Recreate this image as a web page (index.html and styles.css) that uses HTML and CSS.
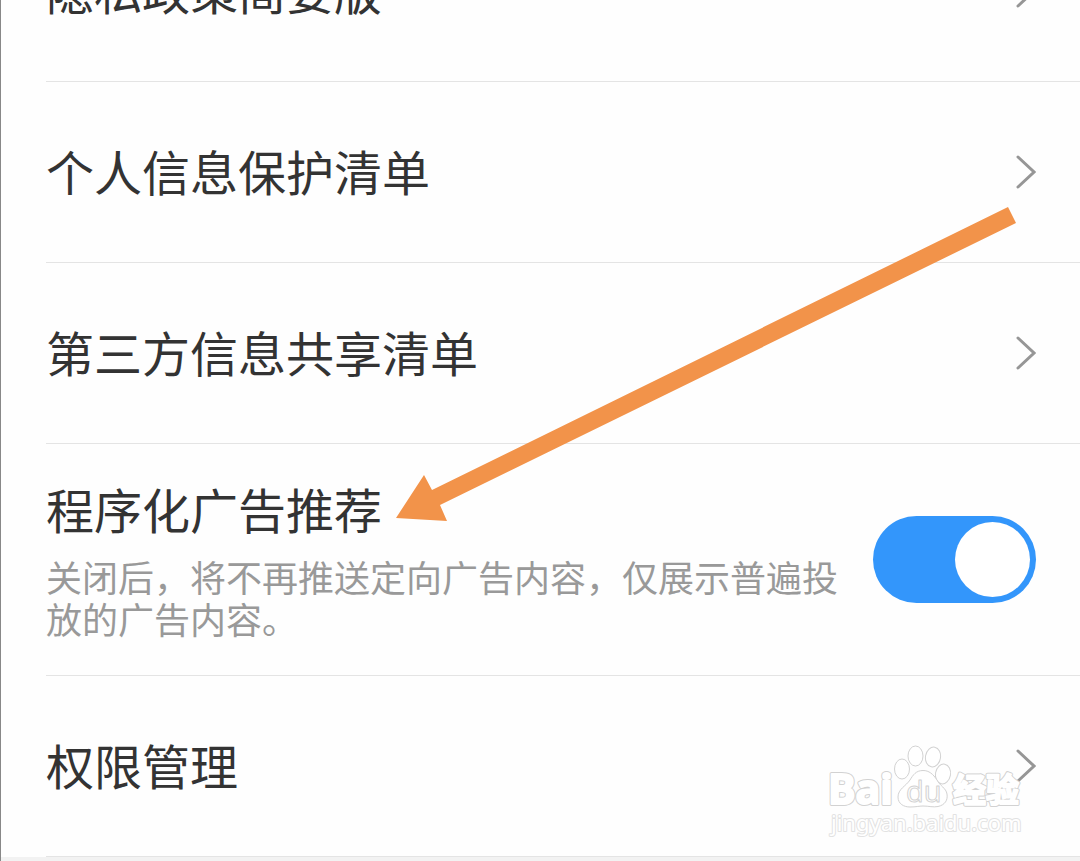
FILE: index.html
```html
<!DOCTYPE html>
<html lang="zh-CN">

<head>
    <meta charset="UTF-8">
    <meta name="viewport" content="width=device-width, initial-scale=1.0">
    <title>隐私设置</title>
    <link rel="stylesheet" href="styles.css">
</head>

<body>
    <div class="page">
        <ul class="setting_list">
            <li>
                <a class="row" href="#">
                    <span class="name">隐私政策简要版</span>
                    <svg class="chevron" viewBox="0 0 20 34"><path d="M2 2L18 17L2 32"/></svg>
                </a>
            </li>
            <li>
                <a class="row" href="#">
                    <span class="name">个人信息保护清单</span>
                    <svg class="chevron" viewBox="0 0 20 34"><path d="M2 2L18 17L2 32"/></svg>
                </a>
            </li>
            <li>
                <a class="row" href="#">
                    <span class="name">第三方信息共享清单</span>
                    <svg class="chevron" viewBox="0 0 20 34"><path d="M2 2L18 17L2 32"/></svg>
                </a>
            </li>
            <li>
                <div class="row switch_row">
                    <div class="info">
                        <label class="name" for="ad_switch">程序化广告推荐</label>
                        <p class="desc" id="ad_desc">关闭后，将不再推送定向广告内容，仅展示普遍投放的广告内容。</p>
                    </div>
                    <input class="switch" type="checkbox" role="switch" id="ad_switch" aria-describedby="ad_desc" checked>
                </div>
            </li>
            <li>
                <a class="row" href="#">
                    <span class="name">权限管理</span>
                    <svg class="chevron" viewBox="0 0 20 34"><path d="M2 2L18 17L2 32"/></svg>
                </a>
            </li>
        </ul>

        <svg class="pointer" viewBox="0 0 620 315">
            <path d="M0 311L28 268L36 283L612 0L620 16L44 298L51 314Z"/>
        </svg>

        <svg class="watermark" viewBox="0 0 200 100">
            <defs>
                <g id="words">
                    <text class="latin" x="0" y="64">Bai</text>
                    <text class="hans" x="125" y="62">经验</text>
                </g>
                <text id="site" class="site" x="3" y="91">jingyan.baidu.com</text>
            </defs>
            <!-- grey outline first, then the white letters over it -->
            <use class="outer" href="#words"/>
            <use class="inner" href="#words"/>
            <g class="paw">
                <ellipse cx="74" cy="29" rx="7.5" ry="10"/>
                <ellipse cx="87.5" cy="16" rx="7.5" ry="10"/>
                <ellipse cx="105" cy="17" rx="7.5" ry="10" transform="rotate(10 105 17)"/>
                <ellipse cx="115" cy="34" rx="7.5" ry="10" transform="rotate(10 115 34)"/>
                <path d="M95 30.500C88 30.500 85 35 82 40C78 46 70 49 70 57C70 64 76 67 82 67C88 67 91 66 95 66C101 66 105 67.500 110 66.500C117 65 120 60 119 54C118 48 112 46 109 40C105 34 101 30.500 95 30.500Z"/>
                <text class="du" x="78" y="62">du</text>
            </g>
            <use class="outer_thin" href="#site"/>
            <use class="inner_thin" href="#site"/>
        </svg>
    </div>
</body>

</html>
```

FILE: styles.css
```css
* {
    margin: 0;
    padding: 0;
    list-style: none;
    box-sizing: border-box;
}

body {
    background-color: #f2f2f2;
    font-family: "Noto Sans CJK SC", sans-serif;
    color: #333;
}

.page {
    position: relative;
    min-height: 100vh;
    overflow: hidden;
    border-left: 1px solid #888;
}

/* list is scrolled, first row is cut by the top edge */
.setting_list {
    margin-top: -99px;
    background-color: #fefefe;
}
.setting_list li {
    padding-left: 45px;
}
.row {
    display: flex;
    align-items: center;
    justify-content: space-between;
    gap: 32px;
    min-height: 181px;
    padding-right: 44px;
    border-bottom: 1px solid #e4e4e4;
    color: #333;
    text-decoration: none;
}
.switch_row {
    min-height: 232px;
}
.name {
    display: block;
    padding-bottom: 4px;
    font-size: 48px;
    line-height: 66px;
}
.info {
    flex: 1;
    padding-bottom: 6px;
}
.desc {
    margin-top: 10px;
    font-size: 36px;
    line-height: 42px;
    color: #999;
}

.chevron {
    flex: none;
    width: 20px;
    height: 34px;
    fill: none;
    stroke: #969696;
    stroke-width: 3;
    stroke-linecap: round;
}

.switch {
    appearance: none;
    flex: none;
    width: 163px;
    height: 87px;
    padding: 6px;
    border-radius: 44px;
    background-color: #3396fb;
    cursor: pointer;
}
.switch::before {
    content: "";
    display: block;
    width: 75px;
    height: 75px;
    border-radius: 50%;
    background-color: #fff;
}
.switch:checked::before {
    margin-left: auto;
}
.switch:not(:checked) {
    background-color: #ccc;
}

.pointer {
    position: absolute;
    top: 207px;
    left: 395px;
    width: 620px;
    height: 315px;
    fill: #f2934a;
    pointer-events: none;
}

.watermark {
    position: absolute;
    right: 52px;
    bottom: 21px;
    width: 200px;
    height: 100px;
    stroke-linejoin: round;
    pointer-events: none;
}
.latin {
    font: bold 41px "Open Sans", sans-serif;
}
.hans {
    font: bold 33px "Noto Sans CJK SC", sans-serif;
}
.du {
    font: 29px "Open Sans", sans-serif;
}
.site {
    font: 22px "Noto Sans", sans-serif;
}
.outer {
    fill: #d2d2d2;
    stroke: #d2d2d2;
    stroke-width: 4;
}
.inner {
    fill: #fff;
    stroke: #fff;
    stroke-width: 2;
}
.paw {
    fill: #fff;
    stroke: #d2d2d2;
    stroke-width: 1;
}
.outer_thin {
    fill: #e2e2e2;
    stroke: #e2e2e2;
    stroke-width: 2;
}
.inner_thin {
    fill: #fff;
}
```
